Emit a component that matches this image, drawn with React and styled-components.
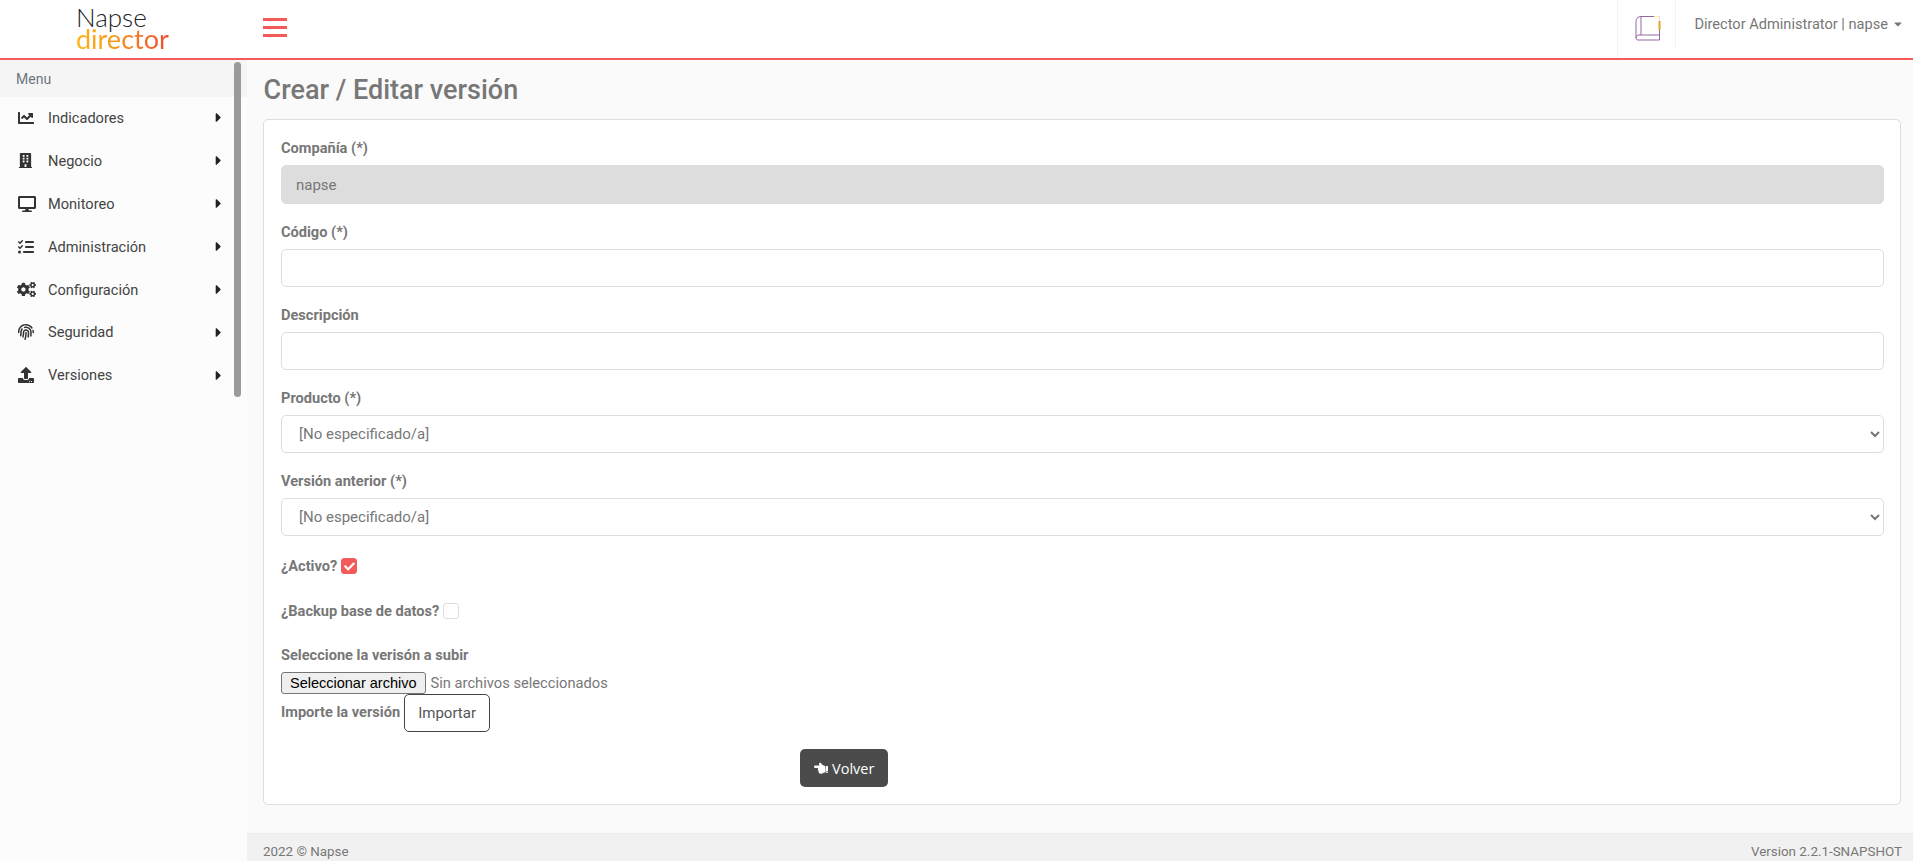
import React from 'react';
import styled, { createGlobalStyle } from 'styled-components';
import {
  FaChartLine,
  FaBuilding,
  FaDesktop,
  FaCogs,
  FaFingerprint,
  FaUpload,
  FaCaretRight,
  FaCaretDown,
  FaCheck,
  FaHandPointLeft,
} from 'react-icons/fa';
import { FaListCheck } from 'react-icons/fa6';

const GlobalStyle = createGlobalStyle`
  html, body { margin: 0; padding: 0; height: 100%; }
  body {
    font-family: Roboto, "Liberation Sans", sans-serif;
    font-size: 14px;
    color: #777;
    background: #fafafa;
    overflow: hidden;
  }
  * { box-sizing: border-box; }
`;

const Page = styled.div`
  display: flex;
  flex-direction: column;
  height: 861px;
`;

const Header = styled.header`
  display: flex;
  align-items: stretch;
  height: 60px;
  flex: none;
  background: #fff;
  border-bottom: 2px solid #f55a5a;
`;

const Brand = styled.div`
  width: 247px;
  padding: 6px 0 0 76px;
  flex: none;
  font-family: Lato, sans-serif;
  line-height: 22px;
`;

const BrandTop = styled.div`
  font-size: 26px;
  font-weight: 300;
  color: #222;
`;

const BrandBottom = styled.div`
  font-size: 27px;
  font-weight: 400;
  background: linear-gradient(90deg, #fdb515 0%, #f7941d 45%, #ee4c35 100%);
  -webkit-background-clip: text;
  background-clip: text;
  color: transparent;
  width: max-content;
`;

const Burger = styled.button`
  display: flex;
  flex-direction: column;
  gap: 5.5px;
  width: 24px;
  margin: 18px 0 0 16px;
  padding: 0;
  border: 0;
  background: none;
  align-self: flex-start;
  span {
    display: block;
    height: 2.5px;
    background: #f55a5a;
  }
`;

const HeaderRight = styled.div`
  margin-left: auto;
  display: flex;
  align-items: flex-start;
`;

const BookCell = styled.div`
  width: 59px;
  height: 58px;
  padding: 15px 0 0 17px;
  border-left: 1px solid #f3f3f3;
  position: relative;
  &::after {
    content: '';
    position: absolute;
    right: 0;
    top: 0;
    height: 48px;
    border-right: 1px solid #f3f3f3;
  }
`;

const UserMenu = styled.div`
  display: flex;
  align-items: center;
  gap: 4px;
  height: 48px;
  padding: 0 9px 0 18px;
  font-size: 14.6px;
  color: #777;
  svg { font-size: 12px; }
`;

const Body = styled.div`
  flex: 1;
  display: flex;
  min-height: 0;
`;

const Sidebar = styled.aside`
  position: relative;
  width: 247px;
  flex: none;
  background: #fcfcfc;
`;

const MenuTitle = styled.div`
  height: 37px;
  padding: 0 0 0 16px;
  display: flex;
  align-items: center;
  background: #f5f5f5;
  color: #6c757d;
  font-size: 14px;
`;

const MenuItem = styled.div`
  display: flex;
  align-items: center;
  height: 42.9px;
  padding: 0 0 1px 18px;
  width: 226px;
  color: #444;
  font-size: 14.6px;
`;

const MenuIcon = styled.span`
  width: ${(p) => 30 + (p.$shift || 0)}px;
  margin-left: ${(p) => -(p.$shift || 0)}px;
  flex: none;
  display: flex;
  align-items: center;
  justify-content: flex-start;
  color: #333;
  font-size: ${(p) => p.$size || 16}px;
`;

const MenuLabel = styled.span`
  flex: 1;
`;

const Caret = styled(FaCaretRight)`
  color: #222;
  font-size: 15px;
  flex: none;
`;

const ScrollThumb = styled.div`
  position: absolute;
  top: 2px;
  left: 234px;
  width: 7px;
  height: 335px;
  border-radius: 4px;
  background: #9a9a9a;
`;

const Main = styled.main`
  flex: 1;
  display: flex;
  flex-direction: column;
  min-width: 0;
`;

const Content = styled.div`
  flex: 1;
  padding: 0 12px 0 16px;
`;

const Title = styled.h1`
  margin: 0;
  height: 59px;
  padding-left: 0.5px;
  line-height: 60px;
  font-size: 27px;
  font-weight: 500;
  color: #777;
`;

const Card = styled.section`
  height: 686px;
  padding: 18px 16px 0 17px;
  background: #fff;
  border: 1px solid #ddd;
  border-radius: 5px;
`;

const Group = styled.div`
  margin-bottom: ${(p) => p.$gap || 18}px;
`;

const Label = styled.label`
  display: block;
  margin-bottom: 7px;
  font-size: 14.6px;
  line-height: 20px;
  font-weight: 700;
  color: #777;
`;

const Field = styled.input`
  display: block;
  width: 100%;
  height: ${(p) => (p.disabled ? 39 : 38)}px;
  padding: 0 14px;
  font: 400 15px Roboto, sans-serif;
  color: #777;
  background: ${(p) => (p.disabled ? '#ddd' : '#fff')};
  border: 1px solid #ddd;
  border-radius: 5px;
  outline: none;
`;

const Select = styled.select`
  display: block;
  width: 100%;
  height: 38px;
  padding: 0 13px;
  font: 400 15px Roboto, sans-serif;
  color: #777;
  background: #fff;
  border: 1px solid #ddd;
  border-radius: 5px;
  outline: none;
`;

const CheckRow = styled.div`
  display: flex;
  align-items: center;
  gap: 4px;
  height: 20px;
  margin-bottom: ${(p) => p.$gap}px;
  font-size: 14.6px;
  font-weight: 700;
  color: #777;
`;

const Box = styled.span`
  display: inline-flex;
  align-items: center;
  justify-content: center;
  width: 16px;
  height: 16px;
  border-radius: 3px;
  border: 1px solid ${(p) => (p.$on ? '#f55a5a' : '#ddd')};
  background: ${(p) => (p.$on ? '#f55a5a' : '#fff')};
  color: #fff;
  font-size: 11px;
`;

const FileRow = styled.div`
  display: flex;
  align-items: center;
  gap: 5px;
  height: 22px;
  font-size: 14.7px;
  color: #777;
`;

const FileButton = styled.button`
  height: 22px;
  padding: 0 8px;
  font: 400 14.5px "Liberation Sans", Arial, sans-serif;
  color: #000;
  background: #efefef;
  border: 1px solid #767676;
  border-radius: 3px;
`;

const ImportRow = styled.div`
  display: flex;
  align-items: flex-start;
  gap: 4px;
  font-size: 14.6px;
  font-weight: 700;
  line-height: 20px;
  color: #777;
`;

const ImportLabel = styled.span`
  margin-top: 8px;
`;

const OutlineButton = styled.button`
  width: 86px;
  height: 38px;
  font: 400 15px Roboto, sans-serif;
  color: #555;
  background: #fff;
  border: 1px solid #444;
  border-radius: 5px;
`;

const Actions = styled.div`
  display: flex;
  margin-top: 17px;
  padding-left: 519px;
`;

const BackButton = styled.button`
  display: flex;
  align-items: center;
  justify-content: center;
  gap: 4px;
  width: 88px;
  height: 38px;
  font: 400 14.5px "Open Sans", Roboto, sans-serif;
  color: #fff;
  background: #4a4b4a;
  border: 0;
  border-radius: 5px;
`;

const Footer = styled.footer`
  flex: none;
  height: 28px;
  padding: 9.5px 11px 0 16px;
  display: flex;
  justify-content: space-between;
  font-size: 13.4px;
  color: #777;
  background: #f1f1f1;
  border-top: 1px solid #ebebeb;
`;

const BookIcon = () => (
  <svg width="26" height="26" viewBox="0 0 26 26" fill="none">
    <path d="M6 1.5H24.5V25H3C1.8 25 1 24.2 1 23V6.5C1 3.5 3 1.5 6 1.5Z" stroke="#93689f" strokeWidth="1" />
    <path d="M6 1.5V20M1 23C1 21 2.5 20 4 20H24.5" stroke="#93689f" strokeWidth="1" />
    <path d="M19 1.5H24.5V6" stroke="#fbe9b5" strokeWidth="1" />
    <path d="M24.5 6V15" stroke="#e0a52a" strokeWidth="2" />
  </svg>
);

const menu = [
  { label: 'Indicadores', icon: <FaChartLine /> },
  { label: 'Negocio', icon: <FaBuilding />, size: 15 },
  { label: 'Monitoreo', icon: <FaDesktop />, size: 18 },
  { label: 'Administración', icon: <FaListCheck /> },
  { label: 'Configuración', icon: <FaCogs />, size: 19, shift: 1 },
  { label: 'Seguridad', icon: <FaFingerprint /> },
  { label: 'Versiones', icon: <FaUpload /> },
];

export default function App() {
  return (
    <Page>
      <GlobalStyle />
      <Header>
        <Brand>
          <BrandTop>Napse</BrandTop>
          <BrandBottom>director</BrandBottom>
        </Brand>
        <Burger aria-label="Menu">
          <span />
          <span />
          <span />
        </Burger>
        <HeaderRight>
          <BookCell>
            <BookIcon />
          </BookCell>
          <UserMenu>
            Director Administrator | napse <FaCaretDown />
          </UserMenu>
        </HeaderRight>
      </Header>
      <Body>
        <Sidebar>
          <MenuTitle>Menu</MenuTitle>
          {menu.map((item) => (
            <MenuItem key={item.label}>
              <MenuIcon $size={item.size} $shift={item.shift}>{item.icon}</MenuIcon>
              <MenuLabel>{item.label}</MenuLabel>
              <Caret />
            </MenuItem>
          ))}
          <ScrollThumb />
        </Sidebar>
        <Main>
          <Content>
            <Title>Crear / Editar versión</Title>
            <Card>
              <Group>
                <Label>Compañía (*)</Label>
                <Field disabled defaultValue="napse" />
              </Group>
              <Group>
                <Label>Código (*)</Label>
                <Field />
              </Group>
              <Group>
                <Label>Descripción</Label>
                <Field />
              </Group>
              <Group>
                <Label>Producto (*)</Label>
                <Select>
                  <option>[No especificado/a]</option>
                </Select>
              </Group>
              <Group $gap={20}>
                <Label>Versión anterior (*)</Label>
                <Select>
                  <option>[No especificado/a]</option>
                </Select>
              </Group>
              <CheckRow $gap={24.5}>
                ¿Activo?
                <Box $on>
                  <FaCheck />
                </Box>
              </CheckRow>
              <CheckRow $gap={24.5}>
                ¿Backup base de datos?
                <Box />
              </CheckRow>
              <Label>Seleccione la verisón a subir</Label>
              <FileRow>
                <FileButton>Seleccionar archivo</FileButton>
                Sin archivos seleccionados
              </FileRow>
              <ImportRow>
                <ImportLabel>Importe la versión</ImportLabel>
                <OutlineButton>Importar</OutlineButton>
              </ImportRow>
              <Actions>
                <BackButton>
                  <FaHandPointLeft /> Volver
                </BackButton>
              </Actions>
            </Card>
          </Content>
          <Footer>
            <span>2022 © Napse</span>
            <span>Version 2.2.1-SNAPSHOT</span>
          </Footer>
        </Main>
      </Body>
    </Page>
  );
}
